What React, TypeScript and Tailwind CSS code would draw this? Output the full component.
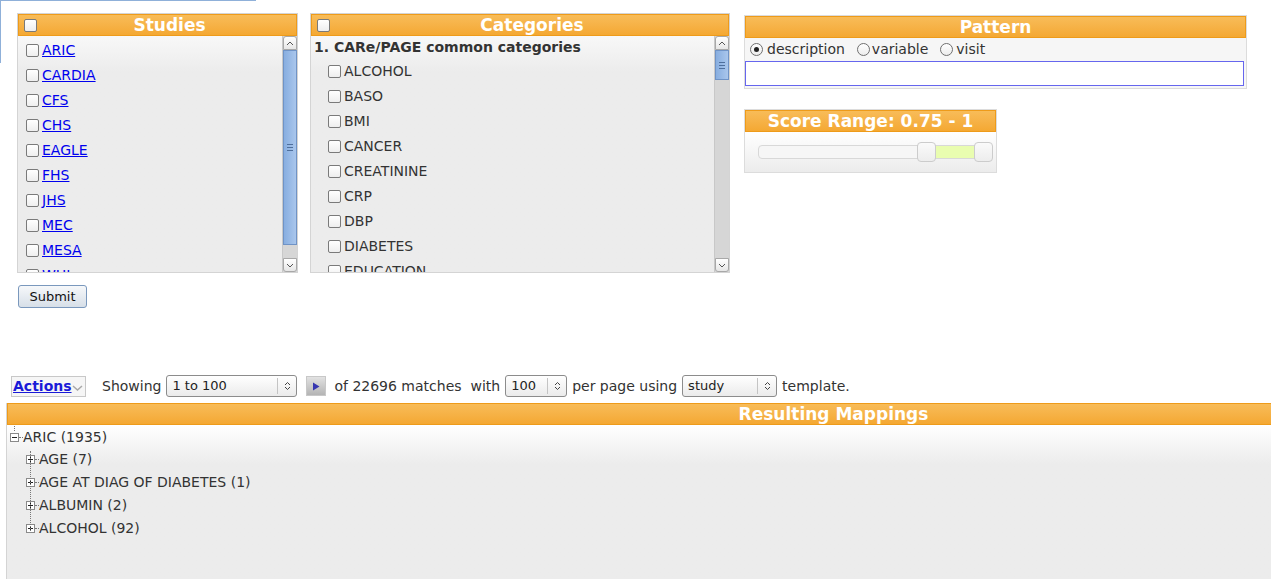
import React from 'react';

const studies = ['ARIC', 'CARDIA', 'CFS', 'CHS', 'EAGLE', 'FHS', 'JHS', 'MEC', 'MESA', 'WHI'];
const categories = ['ALCOHOL', 'BASO', 'BMI', 'CANCER', 'CREATININE', 'CRP', 'DBP', 'DIABETES', 'EDUCATION'];
const children = ['AGE (7)', 'AGE AT DIAG OF DIABETES (1)', 'ALBUMIN (2)', 'ALCOHOL (92)'];

const Box = () => (
  <span className="inline-block w-[13px] h-[13px] shrink-0 border border-[#7a7a7a] rounded-[2px] bg-gradient-to-b from-white to-[#eeeeee]" />
);

const Radio = ({ on = false }: { on?: boolean }) => (
  <span className="inline-flex items-center justify-center w-[13px] h-[13px] shrink-0 border border-[#6f6f6f] rounded-full bg-gradient-to-b from-white to-[#ececec]">
    {on && <span className="w-[5px] h-[5px] rounded-full bg-[#222]" />}
  </span>
);

const Chevron = ({ up = false }: { up?: boolean }) => (
  <svg width="8" height="5" viewBox="0 0 8 5" className="text-[#555]">
    <path d={up ? 'M1 4 L4 1 L7 4' : 'M1 1 L4 4 L7 1'} fill="none" stroke="currentColor" strokeWidth="1" />
  </svg>
);

const Header = ({ title, check = false }: { title: string; check?: boolean }) => (
  <div
    className={`relative h-[22px] flex items-center justify-center border border-[#ee9b1a] bg-gradient-to-b from-[#f8bc58] to-[#f4a832] text-white font-bold text-[17px] leading-none ${
      check ? 'pl-[24px]' : ''
    }`}
  >
    {check && (
      <span className="absolute left-[5px] top-[3px]">
        <Box />
      </span>
    )}
    {title}
  </div>
);

const Scrollbar = ({ thumb }: { thumb: string }) => (
  <div className="w-[15px] shrink-0 flex flex-col bg-[#d6d6d6] border-l border-[#c8c8c8]">
    <div className="h-[14px] flex items-center justify-center bg-gradient-to-b from-white to-[#e6e6e6] border border-[#a8a8a8] rounded-t-[3px]">
      <Chevron up />
    </div>
    <div className={`${thumb} flex items-center justify-center bg-gradient-to-r from-[#88aee0] to-[#a9c6ec] border border-[#6f93c6]`}>
      <svg width="6" height="7" viewBox="0 0 6 7">
        <path d="M0 0.5 H6 M0 3.5 H6 M0 6.5 H6" stroke="#4f6f9c" strokeWidth="1" />
      </svg>
    </div>
    <div className="flex-1" />
    <div className="h-[14px] flex items-center justify-center bg-gradient-to-b from-white to-[#e6e6e6] border border-[#a8a8a8] rounded-b-[3px]">
      <Chevron />
    </div>
  </div>
);

const Select = ({ value, w }: { value: string; w: string }) => (
  <span className={`${w} h-[22px] inline-flex items-center border border-[#8c8c8c] rounded-[3px] bg-gradient-to-b from-white to-[#ebebeb] text-[13px] text-[#222]`}>
    <span className="flex-1 pl-[5px]">{value}</span>
    <span className="w-[19px] h-[16px] flex items-center justify-center border-l border-[#c4c4c4]">
      <svg width="7" height="10" viewBox="0 0 7 10">
        <path d="M1 4 L3.5 1.5 L6 4 M1 6 L3.5 8.5 L6 6" fill="none" stroke="#444" strokeWidth="1" />
      </svg>
    </span>
  </span>
);

const TreeIcon = ({ plus = false }: { plus?: boolean }) => (
  <svg width="9" height="9" viewBox="0 0 9 9" className="shrink-0">
    <rect x="0.5" y="0.5" width="8" height="8" fill="#fff" stroke="#8a8a8a" />
    <path d={plus ? 'M2 4.5 H7 M4.5 2 V7' : 'M2 4.5 H7'} stroke="#222" strokeWidth="1" />
  </svg>
);

export default function App() {
  return (
    <div className="relative w-[1271px] h-[579px] overflow-hidden bg-white font-['DejaVu_Sans',sans-serif] text-[14px] text-[#333]">
      <div className="absolute left-0 top-0 w-[256px] h-[63px] border-t border-l border-[#8fb0d9]" />

      <div className="flex items-start gap-[12px] pl-[17px] pt-[13px]">
        {/* Studies */}
        <div className="w-[281px] shrink-0">
          <div className="h-[260px] flex flex-col border border-[#d4d4d4]">
            <Header title="Studies" check />
            <div className="flex-1 flex min-h-0 bg-gradient-to-b from-[#f8f8f8] to-[#ececec] to-[15%]">
              <div className="flex-1 overflow-hidden pt-[2px] pl-[8px]">
                {studies.map((s) => (
                  <div key={s} className="h-[25px] flex items-center gap-[3px]">
                    <Box />
                    <a href="#" className="text-[#0000ee] underline">{s}</a>
                  </div>
                ))}
              </div>
              <Scrollbar thumb="h-[195px]" />
            </div>
          </div>
          <button className="mt-[12px] ml-[1px] w-[69px] h-[23px] border border-[#7a98bd] rounded-[3px] bg-gradient-to-b from-[#f6f8fa] to-[#d7dfe8] text-[13px] text-[#111]">
            Submit
          </button>
        </div>

        {/* Categories */}
        <div className="w-[420px] shrink-0 h-[260px] flex flex-col border border-[#d4d4d4]">
          <Header title="Categories" check />
          <div className="flex-1 flex min-h-0 bg-gradient-to-b from-[#f8f8f8] to-[#ececec] to-[15%]">
            <div className="flex-1 overflow-hidden">
              <div className="h-[23px] flex items-center pl-[3px] font-bold">1. CARe/PAGE common categories</div>
              {categories.map((c) => (
                <div key={c} className="h-[25px] flex items-center gap-[3px] pl-[17px]">
                  <Box />
                  <span>{c}</span>
                </div>
              ))}
            </div>
            <Scrollbar thumb="h-[30px]" />
          </div>
        </div>

        {/* Right column */}
        <div className="flex flex-col gap-[20px] ml-[2px] mt-[2px]">
          <div className="w-[503px] h-[74px] flex flex-col border border-[#dcdcdc] bg-[#f6f6f6]">
            <Header title="Pattern" />
            <div className="h-[23px] flex items-center pl-[5px]">
              <Radio on />
              <span className="ml-[4px] mr-[12px]">description</span>
              <Radio />
              <span className="ml-[2px] mr-[12px]">variable</span>
              <Radio />
              <span className="ml-[3px]">visit</span>
            </div>
            <input className="mr-[2px] h-[25px] border border-[#6666ee] bg-white outline-none" />
          </div>

          <div className="w-[253px] h-[64px] flex flex-col border border-[#dcdcdc]">
            <Header title="Score Range: 0.75 - 1" />
            <div className="flex-1 flex items-center pl-[13px] pr-[4px] bg-gradient-to-b from-white to-[#ececec]">
              <div className="relative flex-1 h-[14px] rounded-[4px] border border-[#d8d8d8] bg-[#f6f6f6]">
                <div className="absolute left-[176px] right-[16px] -top-px -bottom-px bg-[#e9fdb0] border-y border-[#d8d8d8]" />
                <span className="absolute left-[158px] -top-[4px] w-[19px] h-[20px] rounded-[4px] border border-[#cccccc] bg-gradient-to-b from-[#fafafa] to-[#ededed]" />
                <span className="absolute right-[-2px] -top-[4px] w-[19px] h-[20px] rounded-[4px] border border-[#cccccc] bg-gradient-to-b from-[#fafafa] to-[#ededed]" />
              </div>
            </div>
          </div>
        </div>
      </div>

      {/* Bottom section */}
      <div className="mt-[67px] pl-[6px]">
        <div className="h-[22px] flex items-center text-[#333]">
          <span className="ml-[5px] h-[21px] w-[75px] flex items-center border border-[#c8c8c8] bg-[#f6f6f6] pl-[1px]">
            <a href="#" className="text-[#1a1ad8] font-bold underline">Actions</a>
            <svg width="11" height="6" viewBox="0 0 11 6" className="mt-[4px]">
              <path d="M1 1 L5.5 5 L10 1" fill="none" stroke="#a8a8a8" strokeWidth="1.5" />
            </svg>
          </span>
          <span className="ml-[16px] mr-[5px]">Showing</span>
          <Select value="1 to 100" w="w-[131px]" />
          <span className="ml-[9px] w-[20px] h-[20px] flex items-center justify-center bg-gradient-to-b from-[#e2e2e2] to-[#b4b4b4] border border-[#c8c8c8]">
            <svg width="8" height="9" viewBox="0 0 8 9">
              <path d="M1 0.5 L7.5 4.5 L1 8.5 Z" fill="#3636b0" />
            </svg>
          </span>
          <span className="ml-[8px] mr-[5px] whitespace-pre">of 22696 matches  with</span>
          <Select value="100" w="w-[62px]" />
          <span className="ml-[5px] mr-[5px]">per page using</span>
          <Select value="study" w="w-[95px]" />
          <span className="ml-[5px]">template.</span>
        </div>

        <div className="mt-[6px] w-[1654px] h-[180px] flex flex-col border-l border-[#d4d4d4]">
          <Header title="Resulting Mappings" />
          <div className="flex-1 bg-gradient-to-b from-white to-[#ececec] to-[25%]">
            <div className="relative pt-[1px]">
              <div className="absolute left-[7px] top-[1px] h-[5px] border-l border-dotted border-[#777]" />
              <div className="absolute left-[23px] top-[26px] h-[80px] border-l border-dotted border-[#777]" />
              <div className="h-[22px] flex items-center pl-[3px]">
                <TreeIcon />
                <span className="w-[4px] border-t border-dotted border-[#777]" />
                <span>ARIC (1935)</span>
              </div>
              {children.map((c) => (
                <div key={c} className="h-[23px] flex items-center pl-[19px]">
                  <TreeIcon plus />
                  <span className="w-[4px] border-t border-dotted border-[#777]" />
                  <span>{c}</span>
                </div>
              ))}
            </div>
          </div>
        </div>
      </div>
    </div>
  );
}
